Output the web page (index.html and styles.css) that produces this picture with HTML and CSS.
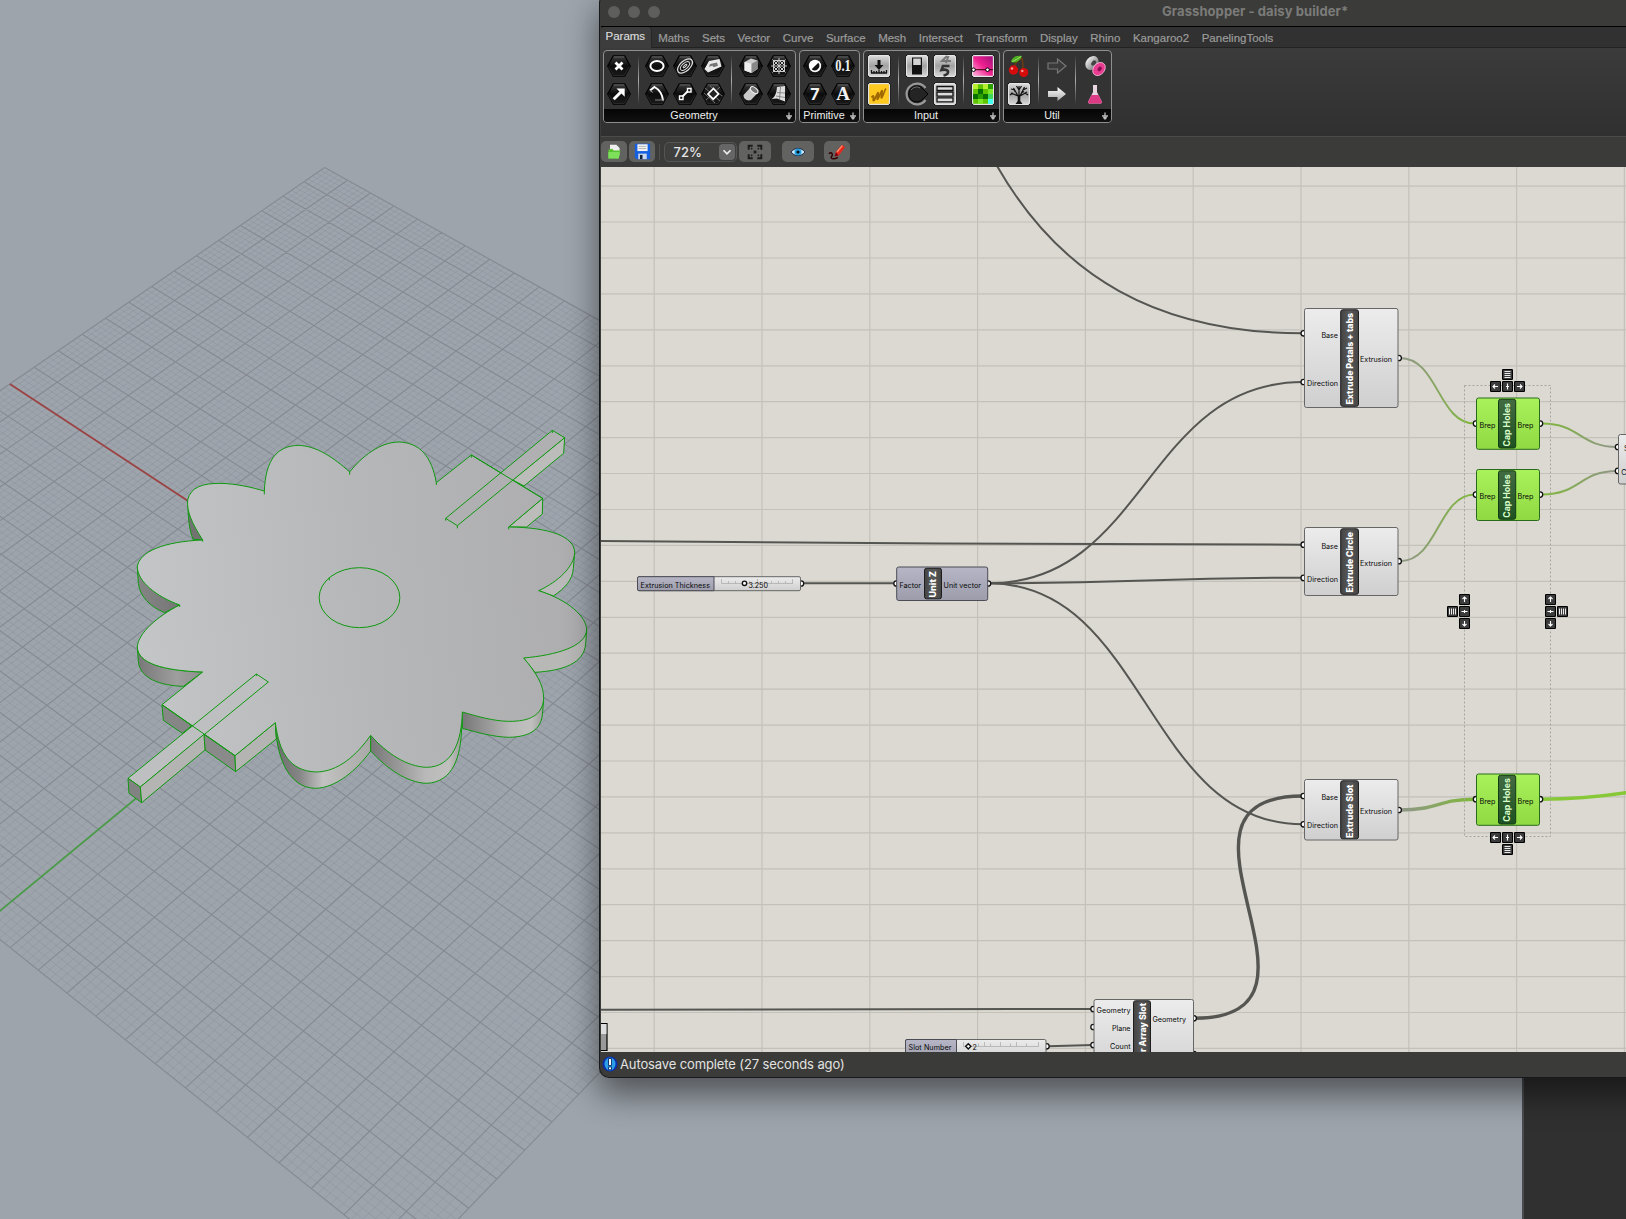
FILE: index.html
```html
<!DOCTYPE html>
<html lang="en">
<head>
<meta charset="utf-8">
<title>Grasshopper - daisy builder*</title>
<link rel="stylesheet" href="styles.css">
</head>
<body>
<svg class="defs" width="0" height="0" aria-hidden="true">
  <defs>
    <linearGradient id="gHex" x1="0" y1="0" x2="0" y2="1"><stop offset="0" stop-color="#3c3c3c"/><stop offset=".5" stop-color="#0c0c0c"/><stop offset="1" stop-color="#1a1a1a"/></linearGradient>
    <linearGradient id="gTile" x1="0" y1="0" x2="0" y2="1"><stop offset="0" stop-color="#d9d9d9"/><stop offset=".5" stop-color="#a2a2a2"/><stop offset="1" stop-color="#d6d6d6"/></linearGradient>
    <linearGradient id="gPink" x1="0" y1="1" x2="1" y2="0"><stop offset="0" stop-color="#ffb3dd"/><stop offset=".5" stop-color="#f0208f"/><stop offset="1" stop-color="#a0107c"/></linearGradient>
    <linearGradient id="gPillTop" x1="0" y1="0" x2="0" y2="1"><stop offset="0" stop-color="#eee"/><stop offset="1" stop-color="#777"/></linearGradient>
    <linearGradient id="gArrow" x1="0" y1="0" x2="0" y2="1"><stop offset="0" stop-color="#fff"/><stop offset="1" stop-color="#a8a8a8"/></linearGradient>
    <symbol id="hex" viewBox="0 0 28 28"><path d="M8.3 3.8h11.4L25.3 14l-5.6 10.2H8.3L2.7 14z" fill="url(#gHex)" stroke="#000" stroke-width="1.2"/><path d="M8.8 4.9h10.4" stroke="#777" stroke-width=".8"/><path d="M3.600 14.500l5 9h10.800l5-9" fill="none" stroke="#3a3a3a" stroke-width=".6"/></symbol>
    <symbol id="tile" viewBox="0 0 28 28"><rect x="2.7" y="2.7" width="22.6" height="22.6" rx="2" fill="#000"/><rect x="3.6" y="3.6" width="20.8" height="20.8" rx="1.4" fill="url(#gTile)" stroke="#f4f4f4" stroke-width="1"/></symbol>
    <symbol id="more" viewBox="0 0 8 8"><path d="M4 .5v6M1 4h6M2.300 5.200L4 7l1.700-1.800" fill="none" stroke="#bbb" stroke-width="1.300"/></symbol>
  </defs>
</svg>

<main class="desktop">
  <svg class="viewport" viewBox="0 0 1626 1219" width="1626" height="1219">
    <defs>
      <linearGradient id="fTop" gradientUnits="userSpaceOnUse" x1="40" y1="600" x2="1400" y2="480"><stop offset="0" stop-color="#c4c5c7"/><stop offset=".5" stop-color="#b6b7b9"/><stop offset="1" stop-color="#adadaf"/></linearGradient>
      <linearGradient id="sideL" x1="0" x2="1"><stop offset="0" stop-color="#858585"/><stop offset="1" stop-color="#767676"/></linearGradient>
      <linearGradient id="side9" x1="0" x2="1"><stop offset="0" stop-color="#777"/><stop offset=".6" stop-color="#9e9e9e"/><stop offset="1" stop-color="#8e8e8e"/></linearGradient>
      <linearGradient id="side8" x1="0" x2="1"><stop offset="0" stop-color="#6c6c6c"/><stop offset=".25" stop-color="#858585"/><stop offset=".5" stop-color="#c2c2c2"/><stop offset=".75" stop-color="#b5b5b3"/><stop offset="1" stop-color="#a9a9a9"/></linearGradient>
      <linearGradient id="side6" x1="0" x2="1"><stop offset="0" stop-color="#777"/><stop offset=".6" stop-color="#b9b9b9"/><stop offset=".85" stop-color="#c0c0bf"/><stop offset="1" stop-color="#9c9c9c"/></linearGradient>
    </defs>
    <path id="gridMinor" class="grid-minor"/>
    <path id="gridMajor" class="grid-major"/>
    <path id="axisX" class="axis-x"/>
    <path id="axisY" class="axis-y"/>
    <g class="solid" transform="translate(120 420) scale(.33333)">
      <path fill="#727270" d="M204 240C203 290 208 330 219 358L248 360L225 300Z"/>
      <path fill="url(#sideL)" d="M52 440L55 490C60 530 90 560 134 578L179 555C110 530 58 485 52 440Z"/>
      <path fill="url(#side9)" d="M52 680L55 725C60 775 120 797 190 799L248 756C130 752 52 730 52 680Z"/>
      <path fill="#868686" d="M126 854L130 901L187 940L215 917Z"/>
      <path fill="#8a8a8a" d="M252 943L345 1007L347 1055L255 990Z"/>
      <path fill="#b4b4b2" d="M345 1007L466 908L469 957L347 1055Z"/>
      <path fill="url(#side8)" d="M466 908C468 1000 500 1104 587 1105C650 1103 710 1050 752 993L752 946Z"/>
      <path fill="url(#side6)" d="M752 946L752 993C800 1045 860 1088 920 1090C1000 1086 1022 1010 1025 925L1027 876Z"/>
      <path fill="url(#side6)" d="M1027 876L1027 925C1075 938 1120 951 1168 952C1235 950 1266 925 1268 875L1271 835Z"/>
      <path fill="#b8b8b6" d="M1211 714L1245 757C1330 752 1392 730 1397 672L1400 630Z"/>
      <path fill="#bababa" d="M1256 512L1300 528C1335 505 1358 480 1360 445L1364 398Z"/>
      <path fill="#bcbcba" d="M1268 235L1267 282L1220 321L1166 321Z"/>
      <path fill="#bcbcba" d="M1334 53L1331 100L1212 198L1178 180Z"/>
      <path fill="url(#fTop)" d="M248 360C215 308 200 275 203 240C212 200 250 190 300 190C350 191 395 202 433 213C437 120 470 78 535 76C590 78 640 112 689 156C725 110 780 66 837 66C900 68 935 110 949 188L1054 105L1268 235L1166 321C1290 322 1364 350 1364 398C1362 440 1315 485 1256 512C1345 540 1400 590 1400 630C1396 680 1310 705 1211 714C1250 760 1271 795 1271 835C1268 885 1230 905 1165 904C1120 903 1075 890 1027 876C1025 960 1000 1041 920 1042C860 1040 800 1000 752 946C710 1005 655 1056 587 1056C510 1052 478 1000 466 908L345 1007L126 854L248 756C130 752 52 730 52 680C55 640 110 590 179 555C110 530 52 485 52 440C58 395 130 365 248 360Z"/>
      <path fill="#b0b0b2" d="M1297 31L1334 53L1012 317L977 295Z"/>
      <path fill="#bebfc1" d="M409 762L445 786L61 1101L24 1075Z"/>
      <path fill="#828282" d="M24 1075L61 1101L65 1148L27 1120Z"/>
      <path fill="#b4b4b2" d="M61 1101L252 943L255 990L65 1148Z"/>
      <path fill="none" d="M1054 105L1268 235M126 854L345 1007M949 188v7M689 156v8M433 213v10M977 295v7M1012 317v8M1297 31v8M1054 105v8M1166 321v7M409 762v6M248 360v5M179 555v6M628 472v9"/>
      <ellipse fill="none" cx="718.5" cy="533" rx="121" ry="90"/>
    </g>
  </svg>

  <div class="side-panel"></div>

  <section class="window">
    <header class="titlebar">
      <span class="light"></span><span class="light"></span><span class="light"></span>
      <h1 class="title">Grasshopper - daisy builder*</h1>
    </header>
    <nav class="tabs">
      <span class="tab tab-active">Params</span><span class="tab">Maths</span><span class="tab">Sets</span><span class="tab">Vector</span><span class="tab">Curve</span><span class="tab">Surface</span><span class="tab">Mesh</span><span class="tab">Intersect</span><span class="tab">Transform</span><span class="tab">Display</span><span class="tab">Rhino</span><span class="tab">Kangaroo2</span><span class="tab">PanelingTools</span>
    </nav>
    <div class="ribbon">
      <div class="group geometry">
        <div class="icons">
          <div class="col">
            <svg class="ic" viewBox="0 0 28 28"><use href="#hex"/><path d="M10.5 10.5l7 7m0-7l-7 7" stroke="#fff" stroke-width="2.8"/></svg>
            <svg class="ic" viewBox="0 0 28 28"><use href="#hex"/><path d="M8.700 19.300l7-7" stroke="#fff" stroke-width="3"/><path d="M11.500 8.500h8.200v8.200z" fill="#fff"/></svg>
          </div>
          <i class="sep"></i>
          <div class="col">
            <svg class="ic" viewBox="0 0 28 28"><use href="#hex"/><ellipse cx="14" cy="14" rx="6.6" ry="5" fill="none" stroke="#fff" stroke-width="2"/></svg>
            <svg class="ic" viewBox="0 0 28 28"><use href="#hex"/><path d="M7 10.500l4.500-3.500C17 10 19.500 15 20 20.500" fill="none" stroke="#fff" stroke-width="1.900"/><path d="M7 10.500l3 2M12 20h8" stroke="#888"/></svg>
          </div>
          <div class="col">
            <svg class="ic" viewBox="0 0 28 28"><use href="#hex"/><g fill="none" stroke="#ddd" transform="rotate(-42 14 14)"><ellipse cx="14" cy="14" rx="9" ry="5" stroke-width="1.3"/><ellipse cx="14" cy="14" rx="5.6" ry="2.8"/><ellipse cx="14" cy="14" rx="2.5" ry=".8"/></g></svg>
            <svg class="ic" viewBox="0 0 28 28"><use href="#hex"/><path d="M10 18l8-8" stroke="#fff" stroke-width="1.8"/><path d="M8.5 16h3.500v3.500H8.500zM16.500 8.500h3.500v3.500h-3.500z" fill="#111" stroke="#fff" stroke-width="1.4"/></svg>
          </div>
          <div class="col">
            <svg class="ic" viewBox="0 0 28 28"><use href="#hex"/><path d="M10 9l10.500-2 2 7.500L9 20.500 5.500 17z" fill="#eaeaea"/><path d="M11 12l7-1.600 1 3.400-4.500 1.500-1-1.600-3.500 1z" fill="#777"/></svg>
            <svg class="ic" viewBox="0 0 28 28"><use href="#hex"/><path d="M6 8l15 13M7 20L21 7M11 6l12 10M5 13l11 10" stroke="#888" stroke-width=".8"/><path d="M14.5 8.5l5 5.5-5.3 5.2L9 14z" fill="#222" stroke="#fff" stroke-width="1.7"/></svg>
          </div>
          <i class="sep"></i>
          <div class="col">
            <svg class="ic" viewBox="0 0 28 28"><use href="#hex"/><path d="M7.5 10l6.5-3.5 6.5 2v8.5L14.5 21l-7-2.5z" fill="#ccc"/><path d="M7.5 10l7 1.7v9.3l-7-2.5z" fill="#eee"/><path d="M14.5 11.7l6-3.2v8.5l-6 4z" fill="#888"/></svg>
            <svg class="ic" viewBox="0 0 28 28"><use href="#hex"/><path d="M6.500 15l7-7.500c3-1.500 7 1 7.500 5l-7 7.500c-4 1.500-7.500-1-7.500-5z" fill="#c8c8c8"/><ellipse cx="17.200" cy="10" rx="4.4" ry="2.500" transform="rotate(38 17 10)" fill="#777" stroke="#f4f4f4"/></svg>
          </div>
          <div class="col">
            <svg class="ic" viewBox="0 0 28 28"><use href="#hex"/><path d="M8.5 8.5h11v11h-11zM14 6v16M6 14h16M7.5 7.5l13 13M20.5 7.5l-13 13M14 8l6 6-6 6-6-6z" fill="none" stroke="#ccc" stroke-width="1"/></svg>
            <svg class="ic" viewBox="0 0 28 28"><use href="#hex"/><path d="M12 7l8-1v15.500l-8-3-5.500.500c3.500-2 5-6 5.500-12z" fill="#ddd"/><path d="M12 12.500l8 .5M11 16l9 1.500M15.500 7l-1 12" stroke="#777" stroke-width=".8"/></svg>
          </div>
        </div>
        <div class="caption"><span>Geometry</span><svg class="more"><use href="#more"/></svg></div>
      </div>

      <div class="group primitive">
        <div class="icons">
          <div class="col">
            <svg class="ic" viewBox="0 0 28 28"><use href="#hex"/><circle cx="14" cy="14" r="6.2" fill="#fff"/><path d="M17.300 10.700a4.700 4.700 0 0 1-6.600 6.600z" fill="#111"/></svg>
            <svg class="ic" viewBox="0 0 28 28"><use href="#hex"/><text class="glyph" x="14" y="20">7</text></svg>
          </div>
          <div class="col">
            <svg class="ic" viewBox="0 0 28 28"><use href="#hex"/><text class="glyph serif" x="14" y="19.300" textLength="15.500" lengthAdjust="spacingAndGlyphs">0.1</text></svg>
            <svg class="ic" viewBox="0 0 28 28"><use href="#hex"/><text class="glyph serif big" x="14" y="20">A</text></svg>
          </div>
        </div>
        <div class="caption"><span>Primitive</span><svg class="more"><use href="#more"/></svg></div>
      </div>

      <div class="group input">
        <div class="icons">
          <div class="col">
            <svg class="ic" viewBox="0 0 28 28"><use href="#tile"/><path d="M12.5 8h3v5h3L14 18l-4.500-5h3z" fill="#111"/><path d="M6 21h16M6.500 18v3M9 19v2M11.500 19v2M14 18v3M16.500 19v2M19 19v2M21.500 18v3" stroke="#111" stroke-width="1.3"/></svg>
            <svg class="ic" viewBox="0 0 28 28"><use href="#tile"/><path d="M4.2 4.2h19.6v19.6H4.2z" fill="#ffc91f"/><path d="M6.500 17.500c1-2 2.500-2.500 2 0s-.5 3.500.5 3 3-8 4-8-1.500 7-.5 7 3.500-9 4.500-9-1.500 7.500-.5 7.500 3-8 4.500-9.500" fill="none" stroke="#a06800" stroke-width="1.700"/></svg>
          </div>
          <i class="sep"></i>
          <div class="col">
            <svg class="ic" viewBox="0 0 28 28"><use href="#tile"/><path d="M9 5.500h10v17H9z" fill="#111"/><path d="M10.200 6.500h7.600v6.500h-7.600z" fill="#d2d2d2"/></svg>
            <svg class="ic" viewBox="0 0 28 28"><path d="M22.500 8A10.400 10.400 0 1 0 22.500 20" fill="none" stroke="#999" stroke-width="2.2"/><path d="M20 9A8 8 0 1 0 20 19L25 14z" fill="#242424" stroke="#000"/><path d="M8 10c2-3 6-4 9-2" stroke="#777" fill="none"/></svg>
          </div>
          <div class="col">
            <svg class="ic" viewBox="0 0 28 28"><use href="#tile"/><path d="M16 4l-5 5h9M17.500 4L15 11" fill="none" stroke="#777" stroke-width="2"/><path d="M18.500 14H12l-1.500 4c4-1 7 0 6.500 2.500-.3 1.500-2 2.500-4.500 3" fill="none" stroke="#333" stroke-width="2.6"/></svg>
            <svg class="ic" viewBox="0 0 28 28"><use href="#tile"/><path d="M6 6.500h16v4H6zM6 12.200h16v4H6zM6 17.900h16v4H6z" fill="#ddd" stroke="#111" stroke-width="1.3"/></svg>
          </div>
          <i class="sep"></i>
          <div class="col">
            <svg class="ic" viewBox="0 0 28 28"><use href="#tile"/><path d="M4.2 4.2h19.6v19.6H4.2z" fill="url(#gPink)"/><path d="M4 17.7h20" stroke="#300"/><circle cx="4.500" cy="17.700" r="1.800" fill="#fff" stroke="#000"/><circle cx="18.500" cy="17.700" r="1.800" fill="#fff" stroke="#000"/></svg>
            <svg class="ic" viewBox="0 0 28 28"><use href="#tile"/><path d="M4.2 4.2h19.6v19.6H4.2z" fill="#5fc400"/><path d="M4 4h5v5H4zM14 4h5v5h-5z" fill="#b8f030"/><path d="M9 9h5v5H9zM14 14h5v5h-5zM4 14h5v5H4z" fill="#087000"/><path d="M19 9h5v5h-5zM9 19h5v5H9z" fill="#7ce628"/><path d="M9 14h5v5H9zM19 4h5v5h-5z" fill="#29a000"/><path d="M19 19h5v5h-5z" fill="#4fe"/><path d="M19 14h5v5h-5z" fill="#3fd85a"/></svg>
          </div>
        </div>
        <div class="caption"><span>Input</span><svg class="more"><use href="#more"/></svg></div>
      </div>

      <div class="group util">
        <div class="icons">
          <div class="col">
            <svg class="ic" viewBox="0 0 28 28"><path d="M9 15c1-4 4-7 8-9M18 18c0-5 0-8-1-12" stroke="#6a3a12" stroke-width="1.500" fill="none"/><path d="M6 10c1.500-6 7-7 11-6-2 5-6 7.500-11 6z" fill="#4fae22"/><path d="M7 9.500c3-1 6-3 9-5" stroke="#b4ec7a" fill="none" stroke-width=".8"/><circle cx="8.500" cy="18" r="4.700" fill="#d60c0c"/><circle cx="18.700" cy="20.500" r="4.500" fill="#d60c0c"/><circle cx="7" cy="16.500" r="1.200" fill="#ff9a9a"/><circle cx="17.300" cy="19" r="1.200" fill="#ff9a9a"/></svg>
            <svg class="ic" viewBox="0 0 28 28"><use href="#tile"/><path d="M10.500 24l2.200-3v-6h2.600v6l2.200 3z" fill="#111"/><path d="M13 16L6 13M13 16L8.500 8M14 15V6M15 16l4.500-9M15 16l7-4M8 13l-3 2M20 13l3 2M10 10L6 9M18 10l4-2M14 10l-2.500-4M14 10l2.500-4M11 12l-2-1.500M17 12.500l2-1" fill="none" stroke="#111" stroke-width="1.200"/></svg>
          </div>
          <i class="sep"></i>
          <div class="col">
            <svg class="ic" viewBox="0 0 28 28"><path d="M5 11h9.500V7L23 14l-8.500 7v-4H5z" fill="#3a3a3a" stroke="#777" stroke-width="1.200"/></svg>
            <svg class="ic" viewBox="0 0 28 28"><path d="M5 11h9.500V7L23 14l-8.500 7v-4H5z" fill="url(#gArrow)"/></svg>
          </div>
          <i class="sep"></i>
          <div class="col">
            <svg class="ic" viewBox="0 0 28 28"><ellipse cx="11" cy="11" rx="7.500" ry="6" transform="rotate(-50 11 11)" fill="url(#gPillTop)"/><ellipse cx="12.500" cy="11.500" rx="3" ry="2" transform="rotate(-50 12 11)" fill="#444"/><ellipse cx="18" cy="17" rx="7.200" ry="5.500" transform="rotate(-50 18 17)" fill="#e83c90" stroke="#ffc0df" stroke-width=".8"/><ellipse cx="18.500" cy="17.500" rx="2.600" ry="1.800" transform="rotate(-50 18 17)" fill="#85104d"/></svg>
            <svg class="ic" viewBox="0 0 28 28"><path d="M12 5h4v7l5 10c0 1-1 1.500-2 1.500H9c-1 0-2-.5-2-1.500l5-10z" fill="#e9d5df"/><path d="M10.500 15h7l3.500 7c0 1-1 1.500-2 1.500H9c-1 0-2-.5-2-1.500z" fill="#dc3a85"/></svg>
          </div>
        </div>
        <div class="caption"><span>Util</span><svg class="more"><use href="#more"/></svg></div>
      </div>
    </div>

    <div class="toolbar">
      <span class="btn b-open"><svg viewBox="0 0 20 20" width="16" height="16"><path d="M5 1h8l4 4v9H5z" fill="#eee"/><path d="M3 7l5-1 1.500 2H18l-2 10H3z" fill="#58c130"/><path d="M3 10h14l-1 8H3z" fill="#7ee05a"/></svg></span>
      <span class="btn b-save"><svg viewBox="0 0 20 20" width="17" height="17"><path d="M1 1h18v18H3l-2-2z" fill="#1560e0"/><path d="M4 1.500h12v8H4z" fill="#f2f2f2"/><path d="M5.500 4h9M5.500 6.500h9" stroke="#aaa"/><path d="M5 12.500h10V19H5z" fill="#c9d6ee"/><path d="M7 14h3v5H7z" fill="#123"/></svg></span>
      <i class="tsep"></i>
      <span class="combo"><span class="zoom">72%</span><span class="drop"><svg viewBox="0 0 16 16" width="14" height="14"><path d="M4 6l4 4 4-4" fill="none" stroke="#eee" stroke-width="1.900"/></svg></span></span>
      <span class="btn b-fit"><svg viewBox="0 0 20 20" width="18" height="18"><path d="M3 7.500V3h4.500M12.500 3H17v4.500M17 12.500V17h-4.500M7.500 17H3v-4.500" fill="none" stroke="#1c1c1c" stroke-width="2.200"/><path d="M8.500 8.500h3v3h-3z" fill="#1c1c1c"/><path d="M5.500 5.500l1.500 1.500M14.500 5.500L13 7M5.500 14.500L7 13M14.500 14.500L13 13" stroke="#1c1c1c" stroke-width="1.400"/></svg></span>
      <span class="btn b-eye"><svg viewBox="0 0 20 20" width="16" height="16"><path d="M1.500 10c4-6 13-6 17 0-4 6-13 6-17 0z" fill="#d8f2ff" stroke="#124" stroke-width="1.200"/><circle cx="10" cy="10" r="4.500" fill="#2ba0dc"/><circle cx="10" cy="10" r="2" fill="#012"/></svg></span>
      <span class="btn b-pen"><svg viewBox="0 0 20 20" width="18" height="18"><path d="M1 12c3-3 5 1 3 3s2 4 7 1" fill="none" stroke="#300" stroke-width="1.600"/><path d="M7.500 15l1.500-5.500 6.500-7.500 3.500 2.500-7 9.500z" fill="#e8271c"/><path d="M10 10l6-7" stroke="#ff9a70" stroke-width="1.300"/><path d="M7.500 15l1.200-4.500 3 3z" fill="#701"/></svg></span>
    </div>

    <svg class="canvas" id="graph" viewBox="601 167 1025 885" width="1025" height="885">
      <defs>
        <linearGradient id="nGrey" x1="0" y1="0" x2="0" y2="1"><stop offset="0" stop-color="#ececec"/><stop offset="1" stop-color="#cfcfcf"/></linearGradient>
        <linearGradient id="nGreen" x1="0" y1="0" x2="0" y2="1"><stop offset="0" stop-color="#aaf25c"/><stop offset="1" stop-color="#90d942"/></linearGradient>
        <linearGradient id="nBlue" x1="0" y1="0" x2="0" y2="1"><stop offset="0" stop-color="#b6b6c6"/><stop offset="1" stop-color="#9c9cab"/></linearGradient>
        <linearGradient id="nPlate" x1="0" y1="0" x2="1" y2="0"><stop offset="0" stop-color="#444"/><stop offset=".5" stop-color="#5a5a5a"/><stop offset="1" stop-color="#444"/></linearGradient>
        <linearGradient id="nPlateG" x1="0" y1="0" x2="0" y2="1"><stop offset="0" stop-color="#436b42"/><stop offset="1" stop-color="#1e5222"/></linearGradient>
        <linearGradient id="wIn" gradientUnits="userSpaceOnUse" x1="1399" y1="0" x2="1475" y2="0"><stop offset="0" stop-color="#909589"/><stop offset="1" stop-color="#7fb93a"/></linearGradient>
        <linearGradient id="wOut" gradientUnits="userSpaceOnUse" x1="1541" y1="0" x2="1617" y2="0"><stop offset="0" stop-color="#7fb93a"/><stop offset="1" stop-color="#909589"/></linearGradient>
        <symbol id="k" viewBox="0 0 11 11"><rect x=".5" y=".5" width="10" height="10" rx="1" fill="#3c3c3c" stroke="#000" stroke-width="1.100"/></symbol>
      </defs>
      <path id="canvasGrid" class="canvas-grid"/>
      <g class="wire">
        <path d="M996.5 165C1060 277 1158 333 1303 333.300"/>
        <path d="M989 583.300C1146 583.300 1146 382 1303 382"/>
        <path d="M989 583.300C1146 583.300 1146 577.700 1303 577.700"/>
        <path d="M989 583.300C1146 583.300 1146 824.300 1303 824.300"/>
        <path d="M600 541C850 543 1050 544.700 1303 544.700"/>
        <path d="M803 583.300H895"/>
        <path d="M600 1009.800L1093 1009"/>
        <path d="M1048 1046.300L1093 1045"/>
        <path class="thick" d="M1194.500 1018.300C1355 1018.300 1141 796 1303 796"/>
      </g>
      <g class="wire">
        <path class="into" d="M1400 358C1438 358 1438 423.600 1475 423.600"/>
        <path class="into" d="M1400 561.200C1438 561.200 1438 494.600 1475 494.600"/>
        <path class="into thick" d="M1400 810C1438 810 1438 799.200 1475 799.200"/>
        <path class="out" d="M1542 423.600C1580 423.600 1580 447 1617 447"/>
        <path class="out" d="M1542 494.500C1580 494.500 1580 470.900 1617 470.900"/>
        <path class="thick lime" d="M1542 799.200C1580 799.200 1605 796 1628 792.500"/>
      </g>
      <rect class="selection" x="1464.500" y="385.500" width="86" height="451"/>

      <g class="port">
        <circle cx="1303.700" cy="333.300" r="2.700"/><circle cx="1303.700" cy="382" r="2.700"/><circle cx="1398.700" cy="358" r="2.700"/>
        <circle cx="1303.700" cy="544.700" r="2.700"/><circle cx="1303.700" cy="577.900" r="2.700"/><circle cx="1398.700" cy="561.200" r="2.700"/>
        <circle cx="1303.700" cy="796" r="2.700"/><circle cx="1303.700" cy="824.300" r="2.700"/><circle cx="1398.700" cy="810" r="2.700"/>
        <circle cx="1476" cy="423.600" r="2.700"/><circle cx="1540" cy="423.600" r="2.700"/>
        <circle cx="1476" cy="494.600" r="2.700"/><circle cx="1540" cy="494.600" r="2.700"/>
        <circle cx="1476" cy="799.200" r="2.700"/><circle cx="1540" cy="799.200" r="2.700"/>
        <circle cx="1618" cy="447" r="2.700"/><circle cx="1618" cy="470.900" r="2.700"/>
        <circle cx="896.500" cy="583.500" r="2.700"/><circle cx="988" cy="583.500" r="2.700"/><circle cx="801" cy="583.500" r="2.700"/>
        <circle cx="1093.500" cy="1009" r="2.700"/><circle cx="1093.500" cy="1027" r="2.700"/><circle cx="1093.500" cy="1045" r="2.700"/>
        <circle cx="1193.700" cy="1018.300" r="2.700"/><circle cx="1193.700" cy="1054" r="2.700"/><circle cx="1046.500" cy="1046.300" r="2.700"/>
      </g>

      <g class="node">
        <rect class="grey" x="1304.500" y="308.500" width="93.500" height="99" rx="2"/>
        <rect class="plate" x="1340.700" y="309.800" width="17.800" height="96.500" rx="2"/>
        <text class="name" transform="translate(1353 404.500) rotate(-90)" textLength="91.500" lengthAdjust="spacingAndGlyphs">Extrude Petals + tabs</text>
        <text x="1321.500" y="337.500" textLength="16.500">Base</text><text x="1307" y="385.500" textLength="31">Direction</text><text x="1360" y="361.500" textLength="32">Extrusion</text>

        <rect class="grey" x="1304.500" y="527.500" width="93.500" height="68" rx="2"/>
        <rect class="plate" x="1340.700" y="528.800" width="17.800" height="65.500" rx="2"/>
        <text class="name" transform="translate(1353 592.500) rotate(-90)" textLength="60.500" lengthAdjust="spacingAndGlyphs">Extrude Circle</text>
        <text x="1321.500" y="549" textLength="16.500">Base</text><text x="1307" y="581.500" textLength="31">Direction</text><text x="1360" y="565.500" textLength="32">Extrusion</text>

        <rect class="grey" x="1304.500" y="779.500" width="93.500" height="60.500" rx="2"/>
        <rect class="plate" x="1340.700" y="780.800" width="17.800" height="58" rx="2"/>
        <text class="name" transform="translate(1353 838) rotate(-90)" textLength="53.500" lengthAdjust="spacingAndGlyphs">Extrude Slot</text>
        <text x="1321.500" y="799.700" textLength="16.500">Base</text><text x="1307" y="828" textLength="31">Direction</text><text x="1360" y="813.700" textLength="32">Extrusion</text>

        <rect class="green" x="1476.500" y="398" width="63" height="51.300" rx="2"/>
        <rect class="plate-g" x="1498.500" y="399.300" width="17.200" height="48.700" rx="2"/>
        <text class="name pale" transform="translate(1510.300 446.500) rotate(-90)" textLength="43.500" lengthAdjust="spacingAndGlyphs">Cap Holes</text>
        <text x="1479.500" y="427.500" textLength="16">Brep</text><text x="1517.500" y="427.500" textLength="16">Brep</text>
        <rect class="green" x="1476.500" y="469.500" width="63" height="51" rx="2"/>
        <rect class="plate-g" x="1498.500" y="470.800" width="17.200" height="48.500" rx="2"/>
        <text class="name pale" transform="translate(1510.300 517.800) rotate(-90)" textLength="43.500" lengthAdjust="spacingAndGlyphs">Cap Holes</text>
        <text x="1479.500" y="498.500" textLength="16">Brep</text><text x="1517.500" y="498.500" textLength="16">Brep</text>
        <rect class="green" x="1476.500" y="774" width="63" height="51.300" rx="2"/>
        <rect class="plate-g" x="1498.500" y="775.300" width="17.200" height="48.700" rx="2"/>
        <text class="name pale" transform="translate(1510.300 821.700) rotate(-90)" textLength="43.500" lengthAdjust="spacingAndGlyphs">Cap Holes</text>
        <text x="1479.500" y="803.500" textLength="16">Brep</text><text x="1517.500" y="803.500" textLength="16">Brep</text>

        <rect class="grey" x="1618.500" y="434.500" width="60" height="49.500" rx="2"/>
        <text x="1624" y="451">S</text><text x="1621.300" y="475.300">C</text>

        <rect class="blue" x="896.700" y="567" width="91" height="33.500" rx="2"/>
        <rect class="plate" x="924.500" y="568.300" width="17" height="30.500" rx="2"/>
        <text class="name" transform="translate(936.300 597.500) rotate(-90)" textLength="26.500" lengthAdjust="spacingAndGlyphs">Unit Z</text>
        <text x="899.500" y="587.700" textLength="21.500">Factor</text><text x="943.500" y="587.700" textLength="37.500">Unit vector</text>

        <rect class="grey" x="637.500" y="576.700" width="163" height="14" rx="1.500"/>
        <path class="blue" d="M639 576.700H714V590.700H639a1.500 1.500 0 0 1-1.500-1.500V578.200a1.500 1.500 0 0 1 1.500-1.500z"/>
        <text x="640.500" y="587.700" textLength="69.500">Extrusion Thickness</text>
        <path class="ticks" d="M721.500 583.500H793M721.500 579v4.500M728.500 581v2.500M735.500 581v2.500M742.500 581v2.500M749.500 581v2.500M757.500 579v4.500M764.500 581v2.500M771.500 581v2.500M778.500 581v2.500M785.500 581v2.500M792.500 579v4.500"/>
        <circle class="knob" cx="744.500" cy="583.300" r="2.200"/>
        <text x="748.500" y="587.700" textLength="19.500">3.250</text>

        <rect class="grey" x="905.500" y="1039.500" width="140.500" height="20" rx="1.500"/>
        <path class="blue" d="M907 1039.500H956.500V1060H905.500V1041a1.500 1.500 0 0 1 1.500-1.500z"/>
        <text x="908.500" y="1049.800" textLength="43">Slot Number</text>
        <path class="ticks" d="M963.500 1046.500H1039M963.500 1042v4.500M978.500 1043.500v3M984.500 1042v4.500M990.500 1043.500v3M1000.500 1042v4.500M1010.500 1043.500v3M1016.500 1042v4.500M1026.500 1043.500v3M1038.500 1042v4.500"/>
        <path class="knob" d="M968.300 1043.700l2.600 2.600-2.600 2.600-2.600-2.600z"/>
        <text x="972.500" y="1049.800">2</text>

        <rect class="grey" x="1094" y="999.500" width="99.500" height="80" rx="2"/>
        <rect class="plate" x="1133.500" y="1000.800" width="17" height="78" rx="2"/>
        <text class="name" transform="translate(1145.500 1052) rotate(-90)" textLength="49" lengthAdjust="spacingAndGlyphs">r Array Slot</text>
        <text x="1096.500" y="1013.300" textLength="34">Geometry</text><text x="1112" y="1031.300" textLength="18.500">Plane</text><text x="1110" y="1049.300" textLength="20.500">Count</text><text x="1152.500" y="1022.300" textLength="33.500">Geometry</text>
        <path fill="#999" stroke="#000" stroke-width="1.200" d="M600 1023.500h7v27h-7z"/><path fill="#ddd" d="M600 1024h6.500v10h-6.500z"/>
      </g>
      <g id="alignKeys"></g>
    </svg>

    <footer class="status">
      <svg viewBox="0 0 16 16" width="16" height="16"><circle cx="8" cy="8" r="7.500" fill="#0a2fae"/><ellipse cx="8" cy="8" rx="5.500" ry="6.500" fill="#2d9fe6"/><path d="M6.500 2.500h3v7h-3zM6.500 11h3v2.700h-3z" fill="#fff" stroke="#012a6b" stroke-width=".9"/></svg>
      <span>Autosave complete (27 seconds ago)</span>
    </footer>
  </section>
</main>
<script src="scene.js"></script>
</body>
</html>
```
FILE: styles.css
```css
* { box-sizing: border-box; }
body { margin: 0; width: 1626px; height: 1219px; overflow: hidden; background: #9da4ac; font-family: Inter, "Liberation Sans", sans-serif; }
.defs { position: absolute; }
.desktop { position: relative; width: 1626px; height: 1219px; overflow: hidden; }
.viewport { display: block; background: #9da4ac; }
.grid-minor { fill: none; stroke: #7f868f; stroke-width: .8; opacity: .34; }
.grid-major { fill: none; stroke: #868a93; stroke-width: 1.15; }
.axis-x { fill: none; stroke: #9c4444; stroke-width: 1.8; }
.axis-y { fill: none; stroke: #4a9c48; stroke-width: 1.8; }
.solid path, .solid ellipse { stroke: #0f990f; stroke-width: 3; stroke-linejoin: round; }
.side-panel { position: absolute; left: 1522px; top: 1070px; width: 104px; height: 149px; background: #303030; border-left: 2px solid #4a4c50; }

.window { position: absolute; left: 600px; top: -6px; width: 1060px; height: 1083px; padding: 6px 0 0 1px; display: flex; flex-direction: column; background: #3b3b39; border-radius: 9px 0 0 9px; box-shadow: 0 0 0 1px #15191b, 0 16px 32px 2px rgba(0,0,0,.48); }
.titlebar { display: flex; align-items: center; gap: 8px; height: 26px; padding: 0 0 3px 7px; background: #3b3b39; }
.light { width: 12px; height: 12px; border-radius: 50%; background: #5e5e5d; }
.title { margin: 0 0 1px 494px; font-size: 13px; line-height: 18px; font-weight: 700; color: #7b7b79; letter-spacing: .08px; white-space: nowrap; padding-bottom: 1px; }
.tabs { display: flex; align-items: stretch; height: 22px; border-top: 1px solid #000; border-bottom: 1px solid #222; background: #313131; font: 11.5px/20px "Liberation Sans", sans-serif; color: #9c9c9c; }
.tab { margin-right: 12.55px; line-height: 22px; -webkit-text-stroke: .2px #9c9c9c; }
.tab-active { margin-right: 6px; padding: 0 6px 0 4.5px; height: 22px; line-height: 18px; background: #3d3d3d; color: #eee; border-radius: 4px 4px 0 0; border-right: 1px solid #262626; }
.ribbon { display: flex; gap: 3.6px; height: 88px; padding: 2px 0 0 2.3px; background: linear-gradient(#3b3b3b, #303030); align-items: flex-start; }
.group { height: 73px; border: 1px solid #8f8f8f; border-radius: 4px; background: #333; overflow: hidden; display: flex; flex-direction: column; }
.geometry { width: 192.4px; }
.primitive { width: 60.4px; }
.input { width: 136.4px; }
.util { width: 108.4px; }
.icons { display: flex; padding: 1px 0 0 1px; height: 58px; flex: none; }
.col { display: flex; flex-direction: column; width: 28px; flex: none; }
.ic { display: block; width: 28px; height: 28px; }
.sep { width: 1px; height: 50px; margin: 3px 4.4px 0; flex: none; background: linear-gradient(transparent, #aaa, transparent); }
.glyph { fill: #f2f2f2; font: bold 16px Inter, sans-serif; text-anchor: middle; }
.serif { font: bold 16px "Liberation Serif", serif; }
.big { font-size: 19px; }
.caption { flex: 1; position: relative; padding-right: 11px; background: linear-gradient(#050505, #111); color: #eee; font: 10.8px/13px "Liberation Sans", sans-serif; text-align: center; }
.more { position: absolute; right: 2px; top: 3px; width: 8px; height: 8px; }
.toolbar { display: flex; align-items: center; height: 31px; padding: 0 0 1px; border-top: 1px solid #4b4b4b; background: #3b3b39; }
.btn { display: flex; align-items: center; justify-content: center; height: 21px; border-radius: 5px; background: #626261; flex: none; }
.b-open { width: 26px; margin-right: 2px; }
.b-save { width: 26px; }
.tsep { width: 1px; height: 16px; margin: 0 4px 0 3.5px; background: #505050; }
.combo { display: flex; align-items: center; justify-content: space-between; width: 73px; height: 20px; margin-right: 2.5px; padding: 0 1px 0 9px; border: 1px solid #555; border-radius: 5px; background: #3f3f3e; }
.zoom { color: #e4e4e4; font-size: 13px; font-weight: 500; }
.drop { display: flex; align-items: center; justify-content: center; width: 16px; height: 16px; border-radius: 4px; background: #666; }
.b-fit { width: 32px; margin-right: 11px; }
.b-eye { width: 32px; margin-right: 10px; }
.b-pen { width: 26px; }

.canvas { display: block; flex: none; background: #dcd9d2; }
.canvas-grid { fill: none; stroke: rgba(60,60,60,.15); stroke-width: 1.2; }
.wire path { fill: none; stroke: #555552; stroke-width: 2; }
.wire .thick { stroke-width: 3.4; }
.wire .into { stroke: url(#wIn); }
.wire .out { stroke: url(#wOut); }
.wire .lime { stroke: #86c836; }
.selection { fill: none; stroke: #a6a5a0; stroke-width: 1; stroke-dasharray: 2 2; }
.port circle { fill: #fff; stroke: #111; stroke-width: 1.3; }
.node text { font: 400 7.2px Inter, sans-serif; fill: #080808; }
.node .name { font: 800 9px Inter, sans-serif; fill: #fff; }
.node .pale { fill: #d9ffca; font-weight: 700; }
.grey { fill: url(#nGrey); stroke: #666; stroke-width: 1; }
.green { fill: url(#nGreen); stroke: #2a6a1c; stroke-width: 1; }
.blue { fill: url(#nBlue); stroke: #4c4c55; stroke-width: 1; }
.plate { fill: url(#nPlate); stroke: #1e1e1e; stroke-width: 1; }
.plate-g { fill: url(#nPlateG); stroke: #123c14; stroke-width: 1; }
.ticks { fill: none; stroke: #aeaeae; stroke-width: .8; }
.knob { fill: #fff; stroke: #111; stroke-width: 1.4; }
.key-mark { fill: none; stroke: #fff; stroke-width: 1.1; }
.key-bars { stroke-width: .9; }

.status { display: flex; align-items: center; gap: 2px; height: 25px; padding: 0 0 2px 1px; border-radius: 0 0 0 9px; background: #3b3b39; color: #e2e2e0; font-size: 13px; letter-spacing: -.12px; white-space: nowrap; }
```
FILE: scene.js
```js
// Ground plane: fit a perspective map from grid indices to pixels.
const anchors = [
  [-14, -14, 324.5, 167.3], [-14, -7, 174.5, 271.3], [-14, 0, 9.6, 384],
  [-8, -14, 465.4, 245.7], [-3, -14, 589.7, 315], [1, 14, 9.9, 947],
  [6, 14, 155.4, 1063.7], [12, 14, 344, 1215], [14, 8, 578.5, 1094],
  [14, 12, 468.6, 1208.3], [0, 0, 360.1, 613.9]
];
const N = Array.from({ length: 8 }, () => new Array(9).fill(0));
function addRow(row, rhs) {
  for (let i = 0; i < 8; i++) {
    for (let j = 0; j < 8; j++) N[i][j] += row[i] * row[j];
    N[i][8] += row[i] * rhs;
  }
}
for (const [a, b, x, y] of anchors) {
  addRow([a, b, 1, 0, 0, 0, -a * x, -b * x], x);
  addRow([0, 0, 0, a, b, 1, -a * y, -b * y], y);
}
for (let i = 0; i < 8; i++) {
  let p = i;
  for (let r = i + 1; r < 8; r++) if (Math.abs(N[r][i]) > Math.abs(N[p][i])) p = r;
  [N[i], N[p]] = [N[p], N[i]];
  for (let r = 0; r < 8; r++) {
    if (r === i) continue;
    const f = N[r][i] / N[i][i];
    for (let c = i; c < 9; c++) N[r][c] -= f * N[i][c];
  }
}
const h = N.map((row, i) => row[8] / row[i]);
function project(a, b) {
  const w = h[6] * a + h[7] * b + 1;
  return ((h[0] * a + h[1] * b + h[2]) / w).toFixed(2) + ' ' + ((h[3] * a + h[4] * b + h[5]) / w).toFixed(2);
}
const line = (a, b, c, d) => 'M' + project(a, b) + 'L' + project(c, d);
let minor = '', major = '';
for (let i = -70; i <= 70; i++) {
  const t = i / 5, s = line(t, -14, t, 14) + line(-14, t, 14, t);
  if (i % 5) minor += s; else major += s;
}
const set = (id, d) => document.getElementById(id).setAttribute('d', d);
set('gridMinor', minor);
set('gridMajor', major);
set('axisX', line(-14, 0, 0, 0));
set('axisY', line(0, 0, 0, 14));

// Graph canvas grid.
let g = '';
for (let k = 0; k < 10; k++) g += 'M' + (654.2 + 107.8 * k).toFixed(1) + ' 167V1052';
for (let k = 0; k < 25; k++) g += 'M601 ' + (186.1 + 35.93 * k).toFixed(1) + 'H1626';
set('canvasGrid', g);

// Alignment keys around the selection.
const marks = {
  left: 'M8 5.5H3M5 3.5L3 5.5l2 2', right: 'M3 5.5h5M6 3.5l2 2-2 2',
  up: 'M5.5 8V3M3.5 5l2-2 2 2', down: 'M5.5 3v5M3.5 6l2 2 2-2',
  mid: 'M5.5 2.5v6M4 5.5h3', midh: 'M2.5 5.5h6M5.5 4v3',
  rows: 'M2.5 2.5h6M2.5 4.5h6M2.5 6.5h6M2.5 8.5h6', cols: 'M2.5 2.5v6M4.5 2.5v6M6.5 2.5v6M8.5 2.5v6'
};
const keys = [
  ['rows', 1507.5, 374.5], ['left', 1495.5, 386.5], ['mid', 1507.5, 386.5], ['right', 1519.5, 386.5],
  ['left', 1495.5, 837.5], ['mid', 1507.5, 837.5], ['right', 1519.5, 837.5], ['rows', 1507.5, 849.5],
  ['up', 1464.5, 599.5], ['midh', 1464.5, 611.5], ['down', 1464.5, 623.5], ['cols', 1452.5, 611.5],
  ['up', 1550.5, 599.5], ['midh', 1550.5, 611.5], ['down', 1550.5, 623.5], ['cols', 1562.5, 611.5]
];
document.getElementById('alignKeys').innerHTML = keys.map(([m, x, y]) =>
  `<g transform="translate(${x - 5.5} ${y - 5.5})"><use href="#k" width="11" height="11"/><path class="key-mark${m === 'rows' || m === 'cols' ? ' key-bars' : ''}" d="${marks[m]}"/></g>`).join('');
```
